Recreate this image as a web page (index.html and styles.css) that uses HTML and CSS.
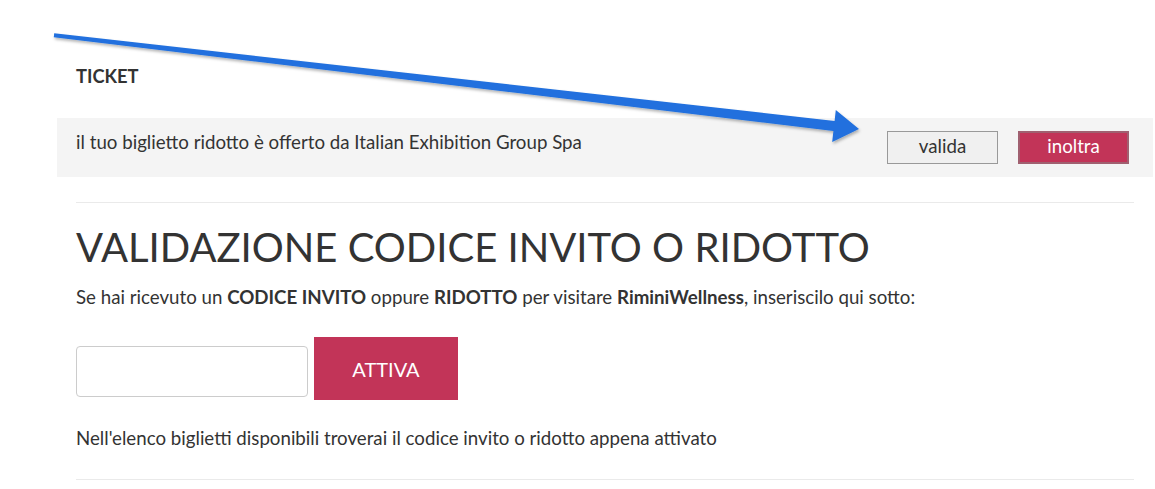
FILE: index.html
```html
<!DOCTYPE html>
<html lang="it">
<head>
    <meta charset="UTF-8">
    <meta name="viewport" content="width=device-width, initial-scale=1.0">
    <title>Ticket</title>
    <link rel="stylesheet" href="styles.css">
</head>
<body>
    <div class="page">
        <h4 class="section-title">TICKET</h4>
        <div class="ticket-row">
            <span class="ticket-text">il tuo biglietto ridotto è offerto da Italian Exhibition Group Spa</span>
            <div class="ticket-actions">
                <button class="btn-light">valida</button>
                <button class="btn-red">inoltra</button>
            </div>
        </div>

        <hr>

        <h1>VALIDAZIONE CODICE INVITO O RIDOTTO</h1>
        <p class="intro">Se hai ricevuto un <b>CODICE INVITO</b> oppure <b>RIDOTTO</b> per visitare <b>RiminiWellness</b>, inseriscilo qui sotto:</p>

        <div class="code-form">
            <input type="text" class="code-input">
            <button class="btn-activate">ATTIVA</button>
        </div>

        <p class="note">Nell'elenco biglietti disponibili troverai il codice invito o ridotto appena attivato</p>

        <hr>
    </div>

    <!-- annotation arrow drawn over the screenshot -->
    <svg class="arrow" width="1155" height="489" viewBox="0 0 1155 489">
        <defs>
            <filter id="shadow" x="-5%" y="-50%" width="110%" height="200%">
                <feDropShadow dx="1" dy="2" stdDeviation="1.5" flood-color="#000" flood-opacity="0.3"/>
            </filter>
        </defs>
        <polygon filter="url(#shadow)" fill="#2070de"
            points="53.8,37.2 833.4,131 832.2,142 859,129 835.8,110 834.6,121 54.2,33.2"/>
    </svg>
</body>
</html>
```

FILE: styles.css
```css
body {
    margin: 0;
    padding: 0;
    background-color: #fff;
    font-family: Lato, "Open Sans", sans-serif;
    color: #333;
}

.page {
    width: 1058px;
    margin: 0 0 0 76px;
    padding-top: 64px;
}

.section-title {
    margin: 0 0 30px;
    font-size: 18.3px;
    font-weight: bold;
    line-height: 24px;
}

.ticket-row {
    display: flex;
    align-items: center;
    justify-content: space-between;
    margin: 0 -19px;
    padding: 0 24px 0 19px;
    height: 59px;
    background-color: #f4f4f4;
}

.ticket-text {
    font-size: 18.7px;
    padding-bottom: 11px;
}

.ticket-actions {
    display: flex;
    gap: 20px;
}

.btn-light, .btn-red {
    width: 111px;
    height: 33px;
    padding: 0 0 4px;
    font-family: Lato, sans-serif;
    font-size: 18.7px;
    cursor: pointer;
}

.btn-light {
    background-color: #f0f0f0;
    border: 1px solid #999;
    color: #333;
}

.btn-red {
    background-color: #c23458;
    border: 2px solid #a06070;
    color: #fff;
}

hr {
    border: none;
    border-top: 1px solid #eaeaea;
    margin: 25px 0 0;
}

h1 {
    margin: 18px 0 0;
    font-size: 40px;
    font-weight: normal;
    line-height: 52px;
    color: #333;
}

.intro {
    margin: 12px 0 0;
    font-size: 18.7px;
    line-height: 24px;
}

.code-form {
    display: flex;
    align-items: flex-start;
    gap: 6px;
    margin-top: 28px;
}

.code-input {
    width: 232px;
    height: 51px;
    margin-top: 9px;
    box-sizing: border-box;
    border: 1px solid #ccc;
    border-radius: 4px;
}

.btn-activate {
    width: 144px;
    height: 63px;
    background-color: #c23458;
    border: none;
    color: #fff;
    font-family: Lato, sans-serif;
    font-size: 20px;
    cursor: pointer;
}

.note {
    margin: 26px 0 0;
    font-size: 18.7px;
    line-height: 24px;
}

.page hr:last-child {
    margin-top: 29px;
}

.arrow {
    position: absolute;
    top: 0;
    left: 0;
    pointer-events: none;
}
```
